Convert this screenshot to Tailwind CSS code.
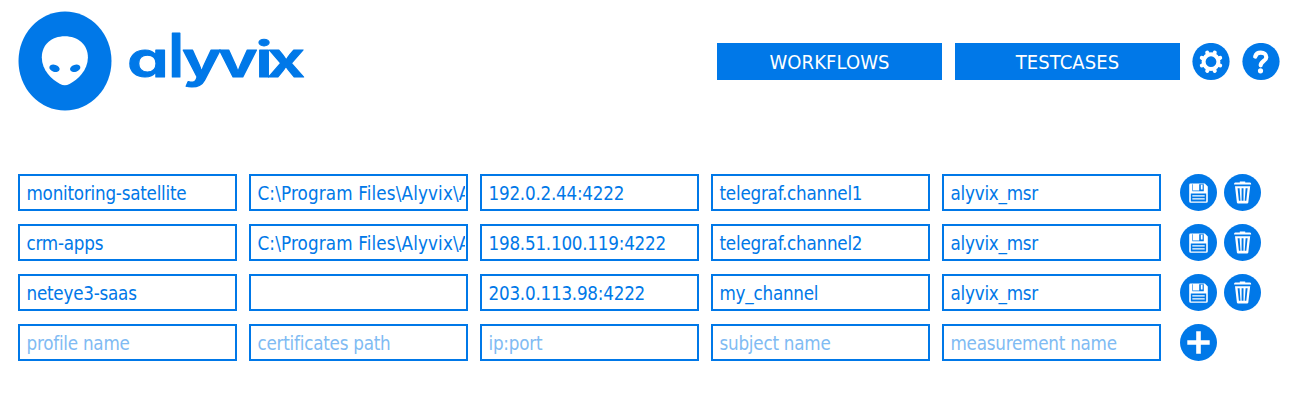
<!DOCTYPE html>
<html lang="en">
<head>
<meta charset="utf-8">
<title>Alyvix</title>
<script src="https://cdn.jsdelivr.net/npm/@tailwindcss/browser@4"></script>
</head>
<body class="bg-white font-['DejaVu_Sans_Condensed','DejaVu_Sans',sans-serif] [font-stretch:condensed] text-[#0078e8]">
<svg class="hidden">
  <symbol id="save" viewBox="0 0 37 37">
    <circle cx="18.5" cy="18.5" r="18.5" fill="#0078e8"/>
    <path fill="#fff" fill-rule="evenodd" d="M10.5 9.6H24.8L27.8 12.6V27.2Q27.8 28.7 26.3 28.7H10.7Q9.2 28.7 9.2 27.2V11Q9.2 9.6 10.5 9.6ZM12.4 10.3V17.2H23.8V10.3ZM10.8 19.6V27.5H26.2V19.6Z"/>
    <path fill="#fff" d="M13 10H19.2V16.4H13ZM20.8 10.8H22.6V15.6H20.8Z"/>
    <path fill="#fff" d="M12.3 21.2H24.7V22.5H12.3ZM12.3 24.3H24.7V25.6H12.3Z"/>
  </symbol>
  <symbol id="trash" viewBox="0 0 37 37">
    <circle cx="18.5" cy="18.5" r="18.5" fill="#0078e8"/>
    <path fill="#fff" fill-rule="evenodd" d="M15.8 7.4H21.2V8.4H26Q27.2 8.4 27.2 10.6H10Q10 8.4 11.2 8.4H15.8ZM11 12.2H26.2L24.3 28.4Q24.2 29.5 23 29.5H14.2Q13 29.5 12.9 28.4ZM13.6 14.3L14.9 26.8H16.5L15.6 14.3ZM17.6 14.3V26.8H19.5V14.3ZM21.6 14.3L20.7 26.8H22.3L23.6 14.3Z"/>
  </symbol>
</svg>

<header class="flex h-[174px] items-start pl-[18px]">
  <svg class="mt-[11px] h-[100px] w-[94px]" viewBox="0 0 94 100">
    <ellipse cx="47" cy="50" rx="46.5" ry="49.6" fill="#0078e8"/>
    <path fill="#fff" d="M46.8 25.3C60 25.3 69.9 33.5 69.9 46.5C69.9 59 60 68.4 51.5 73Q46.8 75.4 42.1 73C33.6 68.4 23.8 59 23.8 46.5C23.8 33.5 33.6 25.3 46.8 25.3Z"/>
    <ellipse cx="36.5" cy="57.3" rx="5.3" ry="3.5" transform="rotate(17 36.5 57.3)" fill="#0078e8"/>
    <ellipse cx="57.2" cy="57.3" rx="5.3" ry="3.5" transform="rotate(-17 57.2 57.3)" fill="#0078e8"/>
  </svg>
  <svg class="mt-[20px] h-[80px] w-[200px]" viewBox="112 20 200 80">
    <text class="[font-feature-settings:'cv11'] [font-kerning:none]" transform="translate(127 76.5) scale(1.37 1)" x="0 28.4 40.2 66.6 93.6 102.2" y="0" font-family="Inter" font-weight="600" font-size="49" fill="#0078e8" stroke="#0078e8" stroke-width="1" stroke-linejoin="round">a<tspan font-size="61" font-weight="400">l</tspan>yvix</text>
  </svg>
  <nav class="mt-[43px] ml-[405px] flex text-[20px] leading-[38px] text-white">
    <div class="flex h-[37px] w-[225px] justify-center bg-[#0078e8]"><span class="tracking-[0.1px]">WORKFLOWS</span></div>
    <div class="ml-[13px] flex h-[37px] w-[225px] justify-center bg-[#0078e8]"><span class="tracking-[0.1px]">TESTCASES</span></div>
    <svg class="ml-3 size-[38px]" viewBox="0 0 38 38">
      <circle cx="19" cy="18.5" r="18.6" fill="#0078e8"/>
      <circle cx="19" cy="18.7" r="7.4" fill="none" stroke="#fff" stroke-width="4"/>
      <path fill="none" stroke="#fff" stroke-width="4" stroke-linecap="round" d="M22.1 11.1L22.8 9.5M26.6 15.6L28.2 14.9M26.6 21.8L28.2 22.5M22.1 26.3L22.8 27.9M15.9 26.3L15.2 27.9M11.4 21.8L9.8 22.5M11.4 15.6L9.8 14.9M15.9 11.1L15.2 9.5"/>
    </svg>
    <svg class="ml-3 size-[38px]" viewBox="0 0 38 38">
      <circle cx="19" cy="18.5" r="18.6" fill="#0078e8"/>
      <path d="M13.2 13.6C14 10.8 16 9.7 18.8 9.7C22 9.7 24.3 11.5 24.3 14.2C24.3 18 18.7 18 18.7 22.3" fill="none" stroke="#fff" stroke-width="4.2" stroke-linecap="round"/>
      <circle cx="18.5" cy="27.8" r="2.6" fill="#fff"/>
    </svg>
  </nav>
</header>

<main class="flex flex-col gap-[13px] pl-[18px] text-[18.67px] leading-[35px] tracking-[-0.23px] whitespace-nowrap">
  <div class="flex h-[37px] gap-3">
    <div class="w-[219px] overflow-hidden border-2 border-[#0078e8] px-[6.5px]">monitoring-satellite</div>
    <div class="w-[219px] border-2 border-[#0078e8] pr-px pl-[6.5px]"><div class="h-full overflow-hidden tracking-[0.15px]">C:\Program Files\Alyvix\A</div></div>
    <div class="w-[219px] overflow-hidden border-2 border-[#0078e8] px-[6.5px]">192.0.2.44:4222</div>
    <div class="w-[219px] overflow-hidden border-2 border-[#0078e8] px-[6.5px]">telegraf.channel1</div>
    <div class="w-[219px] overflow-hidden border-2 border-[#0078e8] px-[6.5px]">alyvix_msr</div>
    <div class="ml-[7px] flex gap-[7px]"><svg class="size-[37px]"><use href="#save"/></svg><svg class="size-[37px]"><use href="#trash"/></svg></div>
  </div>
  <div class="flex h-[37px] gap-3">
    <div class="w-[219px] overflow-hidden border-2 border-[#0078e8] px-[6.5px]">crm-apps</div>
    <div class="w-[219px] border-2 border-[#0078e8] pr-px pl-[6.5px]"><div class="h-full overflow-hidden tracking-[0.15px]">C:\Program Files\Alyvix\A</div></div>
    <div class="w-[219px] overflow-hidden border-2 border-[#0078e8] px-[6.5px]">198.51.100.119:4222</div>
    <div class="w-[219px] overflow-hidden border-2 border-[#0078e8] px-[6.5px]">telegraf.channel2</div>
    <div class="w-[219px] overflow-hidden border-2 border-[#0078e8] px-[6.5px]">alyvix_msr</div>
    <div class="ml-[7px] flex gap-[7px]"><svg class="size-[37px]"><use href="#save"/></svg><svg class="size-[37px]"><use href="#trash"/></svg></div>
  </div>
  <div class="flex h-[37px] gap-3">
    <div class="w-[219px] overflow-hidden border-2 border-[#0078e8] px-[6.5px]">neteye3-saas</div>
    <div class="w-[219px] overflow-hidden border-2 border-[#0078e8] px-[6.5px]"></div>
    <div class="w-[219px] overflow-hidden border-2 border-[#0078e8] px-[6.5px]">203.0.113.98:4222</div>
    <div class="w-[219px] overflow-hidden border-2 border-[#0078e8] px-[6.5px]">my_channel</div>
    <div class="w-[219px] overflow-hidden border-2 border-[#0078e8] px-[6.5px]">alyvix_msr</div>
    <div class="ml-[7px] flex gap-[7px]"><svg class="size-[37px]"><use href="#save"/></svg><svg class="size-[37px]"><use href="#trash"/></svg></div>
  </div>
  <div class="flex h-[37px] gap-3 text-[#80bbf3]">
    <div class="w-[219px] overflow-hidden border-2 border-[#0078e8] px-[6.5px]">profile name</div>
    <div class="w-[219px] overflow-hidden border-2 border-[#0078e8] px-[6.5px]">certificates path</div>
    <div class="w-[219px] overflow-hidden border-2 border-[#0078e8] px-[6.5px]">ip:port</div>
    <div class="w-[219px] overflow-hidden border-2 border-[#0078e8] px-[6.5px]">subject name</div>
    <div class="w-[219px] overflow-hidden border-2 border-[#0078e8] px-[6.5px]">measurement name</div>
    <svg class="ml-[7px] size-[37px]" viewBox="0 0 37 37"><circle cx="18.5" cy="18.5" r="18.5" fill="#0078e8"/><path d="M16.2 7.3H20.8V16.2H29.7V20.8H20.8V29.7H16.2V20.8H7.3V16.2H16.2Z" fill="#fff"/></svg>
  </div>
</main>
</body>
</html>
